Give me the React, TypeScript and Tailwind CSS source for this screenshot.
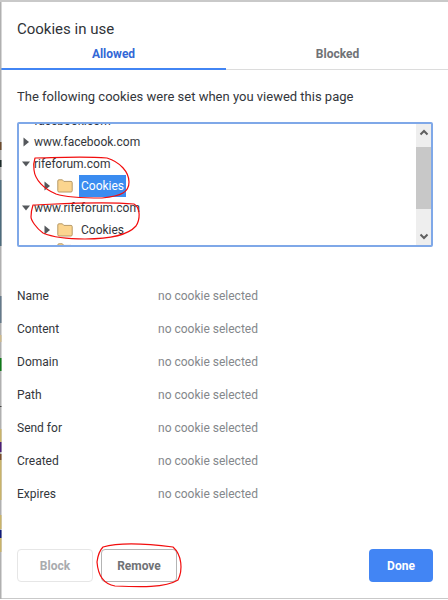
import React from "react";

function Caret({ open }: { open?: boolean }) {
  return (
    <svg width="8" height="10" viewBox="0 0 8 10" className="shrink-0">
      {open ? <path d="M0 2.5h8L4 7.5z" fill="#55585c" /> : <path d="M1.5 .5l5.5 4.5-5.5 4.5z" fill="#55585c" />}
    </svg>
  );
}

function Folder() {
  return (
    <svg width="16" height="14" viewBox="0 0 16 14" className="shrink-0">
      <path d="M.8 3V2Q.8.8 2 .8h3.4l1.4 1.6H14q1.2 0 1.2 1.2v8.2q0 1.2-1.2 1.2H2q-1.2 0-1.2-1.2z" fill="#fbd58f" stroke="#b79a67" strokeWidth="1" />
    </svg>
  );
}

function Host({ text }: { text: string }) {
  return (
    <div className="flex h-[22px] items-center">
      <div className="flex w-[15px] pl-[3px]"><Caret open /></div>
      <span>{text}</span>
    </div>
  );
}

function CookieRow({ selected }: { selected?: boolean }) {
  return (
    <div className="flex h-[22px] items-center pl-[24px]">
      <Caret />
      <div className="mr-[6px] ml-[6px]"><Folder /></div>
      <span className={selected ? "flex h-[22px] items-center bg-[#3b8cf0] px-[2px] text-white" : "px-[2px]"}>Cookies</span>
    </div>
  );
}

const fields = ["Name", "Content", "Domain", "Path", "Send for", "Created", "Expires"];

export default function App() {
  return (
    <div className="relative h-[600px] w-[448px] overflow-hidden bg-white font-['Roboto',sans-serif] text-[12px] text-[#33363b]">
      <div className="flex h-[599px] flex-col border-t-2 border-b border-l border-[#c9c9c9] bg-white">
        <h1 className="px-4 pt-[17px] text-[15px] leading-5 text-[#303338]">Cookies in use</h1>
        <div className="mt-[6px] flex h-[25px] border-b border-[#dcdcdc] text-[12px] font-bold">
          <div className="-mb-px flex h-[25px] w-[225px] items-start justify-center border-b-2 border-[#4285f4] text-[#3367d6]">Allowed</div>
          <div className="flex flex-1 items-start justify-center pl-[1px] text-[#6f7276]">Blocked</div>
        </div>
        <p className="px-4 pt-[17px] text-[13px] leading-5 text-[#33363b]">The following cookies were set when you viewed this page</p>
        <div className="relative mx-4 mt-[15px] h-[125px] w-[416px] overflow-hidden rounded-[2px] border-2 border-[#7fa8e8]">
          <div className="-mt-[14px] pr-[16px] leading-none">
            <div className="flex h-[22px] items-center pl-[15px]">facebook.com</div>
            <div className="-mt-[1px] flex h-[22px] items-center">
              <div className="flex w-[15px] pl-[3px]"><Caret /></div>
              <span>www.facebook.com</span>
            </div>
            <Host text="rifeforum.com" />
            <CookieRow selected />
            <Host text="www.rifeforum.com" />
            <CookieRow />
            <div className="-mt-[2px] flex h-[22px] items-center pl-[38px]"><Folder /></div>
          </div>
          <div className="absolute top-0 right-0 flex h-full w-[15px] flex-col bg-[#eeeeee]">
            <div className="flex h-[23px] justify-center pt-[5px]">
              <svg width="10" height="7" viewBox="0 0 10 7"><path d="M1.5 5.5L5 2l3.5 3.5" fill="none" stroke="#5f5f5f" strokeWidth="2" /></svg>
            </div>
            <div className="h-[62px] bg-[#c8c8c8]" />
            <div className="flex flex-1 items-end justify-center pb-[5px]">
              <svg width="10" height="7" viewBox="0 0 10 7"><path d="M1.5 1.5L5 5l3.5-3.5" fill="none" stroke="#5f5f5f" strokeWidth="2" /></svg>
            </div>
          </div>
        </div>
        <dl className="mt-[39px] flex flex-col gap-[13px] px-4">
          {fields.map((f) => (
            <div key={f} className="flex h-[20px] items-center">
              <dt className="w-[141px]">{f}</dt>
              <dd className="text-[#84878b]">no cookie selected</dd>
            </div>
          ))}
        </dl>
        <div className="mt-auto flex items-center gap-[8px] pr-[15px] pl-4 pb-[16px] text-[12px] font-bold">
          <button className="h-[33px] w-[76px] rounded-[4px] border border-[#e6e6e6] text-[#a9abae]">Block</button>
          <button className="h-[33px] w-[76px] rounded-[4px] border border-[#b4b4b4] text-[#6f7276]">Remove</button>
          <button className="ml-auto h-[33px] w-[64px] rounded-[4px] bg-[#4285f4] text-white">Done</button>
        </div>
      </div>
      <svg className="pointer-events-none absolute top-0 left-0" width="448" height="600" viewBox="0 0 448 600">
        <rect x="0" y="2" width="1.5" height="597" fill="#b0b0b0" />
        <rect x="0" y="142" width="1.5" height="8" fill="#6b4a2c" />
        <rect x="0" y="160" width="1.5" height="7" fill="#1c2b2a" />
        <rect x="0" y="180" width="1.5" height="66" fill="#4d6b7c" />
        <rect x="0" y="296" width="1.5" height="27" fill="#64798a" />
        <rect x="0" y="335" width="1.5" height="7" fill="#cdb98c" />
        <rect x="0" y="358" width="1.5" height="13" fill="#0f7a18" />
        <rect x="0" y="406" width="1.5" height="1" fill="#444444" />
        <rect x="0" y="429" width="1.5" height="13" fill="#c9b36a" />
        <rect x="0" y="442" width="1.5" height="10" fill="#4b1e74" />
        <rect x="0" y="454" width="1.5" height="6" fill="#7a4f2a" />
        <rect x="0" y="460" width="1.5" height="40" fill="#c9b36a" />
        <rect x="0" y="515" width="1.5" height="14" fill="#c9b36a" />
        <rect x="0" y="530" width="1.5" height="8" fill="#101a7a" />
        <rect x="0" y="538" width="1.5" height="14" fill="#c9b36a" />
        <g fill="none" stroke="#f20d0d" strokeWidth="1.2" strokeLinejoin="round">
          <path d="M35 158C50 158 80 156 107 158C120 162 129 172 129 182C129 192 122 196 102 198C85 198 65 197 56 194C44 189 35 180 34 170C33 165 34 161 35 158Z" />
          <path d="M33 205C60 204 100 201 134 204C141 208 140 220 136 226C128 235 110 239 85 239C65 239 50 236 43 233C36 228 31 220 31 217C31 212 32 208 33 205Z" />
          <path d="M103 547C120 542 150 544 173 547C182 555 183 570 178 580C165 588 140 587 115 586C103 584 98 575 97 562C98 554 100 550 103 547Z" />
        </g>
      </svg>
    </div>
  );
}
